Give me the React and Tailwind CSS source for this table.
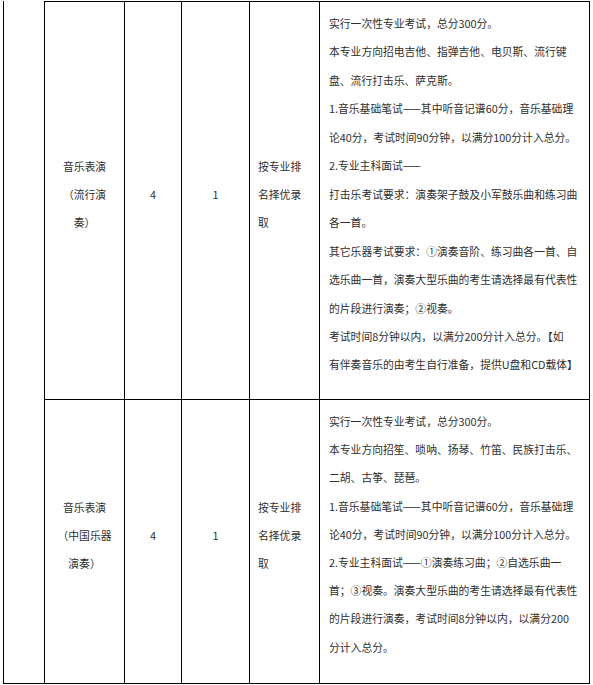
import React from 'react';

const rows = [
  {
    major: ['音乐表演', '（流行演', '奏）'],
    years: '4',
    count: '1',
    rule: ['按专业排', '名择优录', '取'],
    height: 'h-[398px]',
    noteLeading: 'leading-[28.45px] pt-[7px]',
    notes: [
      '实行一次性专业考试，总分300分。',
      '本专业方向招电吉他、指弹吉他、电贝斯、流行键',
      '盘、流行打击乐、萨克斯。',
      '1.音乐基础笔试——其中听音记谱60分，音乐基础理',
      '论40分，考试时间90分钟，以满分100分计入总分。',
      '2.专业主科面试——',
      '打击乐考试要求：演奏架子鼓及小军鼓乐曲和练习曲',
      '各一首。',
      '其它乐器考试要求：①演奏音阶、练习曲各一首、自',
      '选乐曲一首，演奏大型乐曲的考生请选择最有代表性',
      '的片段进行演奏；②视奏。',
      '考试时间8分钟以内，以满分200分计入总分。【如',
      '有伴奏音乐的由考生自行准备，提供U盘和CD载体】',
    ],
  },
  {
    major: ['音乐表演', '（中国乐器', '演奏）'],
    years: '4',
    count: '1',
    rule: ['按专业排', '名择优录', '取'],
    height: 'h-[285px] border-b',
    noteLeading: 'leading-[28.2px] pt-[7px]',
    notes: [
      '实行一次性专业考试，总分300分。',
      '本专业方向招笙、唢呐、扬琴、竹笛、民族打击乐、',
      '二胡、古筝、琵琶。',
      '1.音乐基础笔试——其中听音记谱60分，音乐基础理',
      '论40分，考试时间90分钟，以满分100分计入总分。',
      '2.专业主科面试——①演奏练习曲；②自选乐曲一',
      '首；③视奏。演奏大型乐曲的考生请选择最有代表性',
      '的片段进行演奏，考试时间8分钟以内，以满分200',
      '分计入总分。',
    ],
  },
];

const Lines = ({ items }) => (
  <div>
    {items.map((t, i) => (
      <div key={i} className="whitespace-nowrap">{t}</div>
    ))}
  </div>
);

export default function App() {
  return (
    <div
      className="w-[593px] h-[685px] bg-white pt-[1px] pl-[3px] text-[10.8px] leading-[28.2px] text-[#2f2f2f]"
      style={{ fontFamily: '"Microsoft YaHei", "Noto Sans CJK SC", sans-serif' }}
    >
      <div className="flex">
        <div className="w-[41px] h-[683px] border-l border-b border-black shrink-0" />
        <div className="flex flex-col">
          {rows.map((r, i) => (
            <div key={i} className={`flex border-black ${r.height}`}>
              <div className="w-[80px] shrink-0 border-l border-t border-black flex items-center justify-center text-center pb-[13px]">
                <Lines items={r.major} />
              </div>
              <div className="w-[57px] shrink-0 border-l border-t border-black flex items-center justify-center pb-[13px]">
                {r.years}
              </div>
              <div className="w-[68px] shrink-0 border-l border-t border-black flex items-center justify-center pb-[13px]">
                {r.count}
              </div>
              <div className="w-[70px] shrink-0 border-l border-t border-black flex items-center pl-[8px] pb-[13px]">
                <Lines items={r.rule} />
              </div>
              <div className={`w-[271px] shrink-0 border-l border-t border-r border-black pl-[9px] ${r.noteLeading}`}>
                <Lines items={r.notes} />
              </div>
            </div>
          ))}
        </div>
      </div>
    </div>
  );
}
